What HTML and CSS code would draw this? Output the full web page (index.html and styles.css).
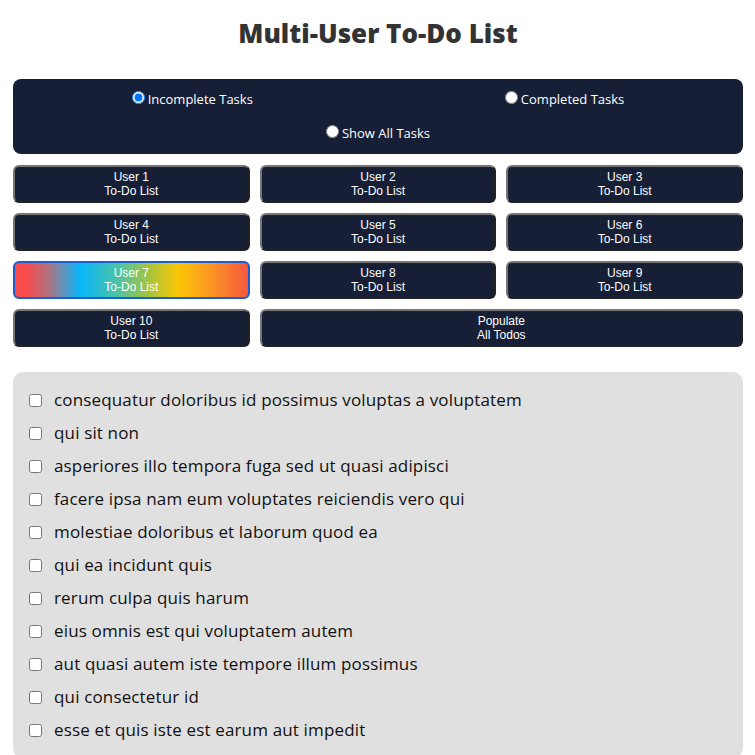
FILE: index.html
```html
<!DOCTYPE html>
<html lang="en">
<head>
<meta charset="utf-8">
<title>Multi-User To-Do List</title>
<link rel="stylesheet" href="styles.css">
</head>
<body>
<div class="app">
  <h1 class="title">Multi-User To-Do List</h1>
  <form class="filters">
    <label class="filter"><input type="radio" name="filter" checked>Incomplete Tasks</label>
    <label class="filter"><input type="radio" name="filter">Completed Tasks</label>
    <label class="filter"><input type="radio" name="filter">Show All Tasks</label>
  </form>
  <div class="users">
    <button class="user-btn">User 1<br>To-Do List</button>
    <button class="user-btn">User 2<br>To-Do List</button>
    <button class="user-btn">User 3<br>To-Do List</button>
    <button class="user-btn">User 4<br>To-Do List</button>
    <button class="user-btn">User 5<br>To-Do List</button>
    <button class="user-btn">User 6<br>To-Do List</button>
    <button class="user-btn active">User 7<br>To-Do List</button>
    <button class="user-btn">User 8<br>To-Do List</button>
    <button class="user-btn">User 9<br>To-Do List</button>
    <button class="user-btn">User 10<br>To-Do List</button>
    <button class="user-btn wide">Populate<br>All Todos</button>
  </div>
  <ul class="todos">
    <li class="todo"><input type="checkbox"><span>consequatur doloribus id possimus voluptas a voluptatem</span></li>
    <li class="todo"><input type="checkbox"><span>qui sit non</span></li>
    <li class="todo"><input type="checkbox"><span>asperiores illo tempora fuga sed ut quasi adipisci</span></li>
    <li class="todo"><input type="checkbox"><span>facere ipsa nam eum voluptates reiciendis vero qui</span></li>
    <li class="todo"><input type="checkbox"><span>molestiae doloribus et laborum quod ea</span></li>
    <li class="todo"><input type="checkbox"><span>qui ea incidunt quis</span></li>
    <li class="todo"><input type="checkbox"><span>rerum culpa quis harum</span></li>
    <li class="todo"><input type="checkbox"><span>eius omnis est qui voluptatem autem</span></li>
    <li class="todo"><input type="checkbox"><span>aut quasi autem iste tempore illum possimus</span></li>
    <li class="todo"><input type="checkbox"><span>qui consectetur id</span></li>
    <li class="todo"><input type="checkbox"><span>esse et quis iste est earum aut impedit</span></li>
  </ul>
</div>
</body>
</html>
```

FILE: styles.css
```css
html, body {
  margin: 0;
  padding: 0;
  background: #ffffff;
}

body {
  font-family: "Open Sans", "DejaVu Sans", sans-serif;
}

.app {
  padding: 0 12px 0 13px;
}

.title {
  margin: 16px 0 29px;
  font-size: 26px;
  line-height: 34px;
  font-weight: 800;
  color: #333333;
  text-align: center;
}

.filters {
  display: flex;
  flex-wrap: wrap;
  justify-content: center;
  column-gap: 252px;
  row-gap: 14px;
  margin: 0;
  padding: 10px 0 11px;
  background: #161f36;
  border-radius: 8px;
}

.filter {
  display: flex;
  align-items: center;
  height: 20px;
  font-size: 13px;
  color: #ffffff;
}

.filter input {
  width: 13px;
  height: 13px;
  margin: -4px 3px 0 0;
}

.users {
  display: grid;
  grid-template-columns: repeat(3, 1fr);
  gap: 10px;
  margin-top: 11px;
}

.user-btn {
  height: 38px;
  padding: 0;
  font-family: "Liberation Sans", Arial, sans-serif;
  font-size: 12px;
  line-height: 14px;
  color: #ffffff;
  background: #161f36;
  border: 2px outset #767676;
  border-radius: 6px;
}

.user-btn.wide {
  grid-column: span 2;
}

.user-btn.active {
  border: 2px solid #1a5fd0;
  background: linear-gradient(90deg, #f84b4b 5%, #b3707c 14%, #08b6fb 28%, #4cc3a6 44%, #a9c43a 58%, #fbc706 70%, #fb8e27 86%, #f6573e 100%);
}

.todos {
  list-style: none;
  margin: 25px 0 0;
  padding: 11px 16px 12px;
  background: #e0e0e0;
  border-radius: 10px;
}

.todo {
  display: flex;
  align-items: center;
  gap: 12px;
  height: 33px;
  font-size: 17px;
  letter-spacing: 0.15px;
  color: #111111;
}

.todo input {
  width: 13px;
  height: 13px;
  margin: 1px 0 0;
}
```
